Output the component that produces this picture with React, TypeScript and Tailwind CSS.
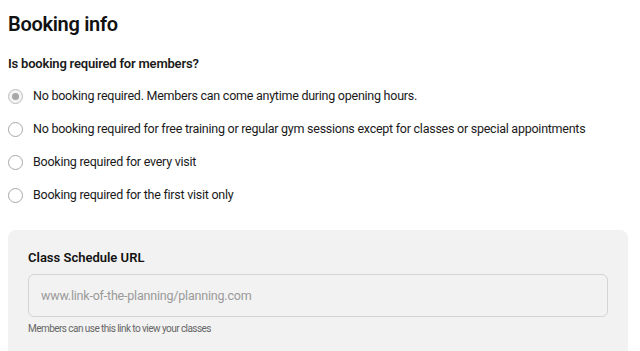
import React, { useState } from 'react';

const options = [
  'No booking required. Members can come anytime during opening hours.',
  'No booking required for free training or regular gym sessions except for classes or special appointments',
  'Booking required for every visit',
  'Booking required for the first visit only',
];

const Radio: React.FC<{ checked: boolean }> = ({ checked }) => (
  <span
    className={`flex h-[15px] w-[15px] shrink-0 items-center justify-center rounded-full border ${
      checked ? 'border-[#bdbdbd] bg-[#f4f4f4]' : 'border-[#a8a8a8] bg-white'
    }`}
  >
    {checked && <span className="h-[7px] w-[7px] rounded-full bg-[#a8a8a8]" />}
  </span>
);

export default function App() {
  const [selected, setSelected] = useState(0);

  return (
    <div
      className="min-h-screen bg-white px-2 pt-[11px] text-[#1a1a1a]"
      style={{ fontFamily: 'Roboto, "Noto Sans", sans-serif' }}
    >
      <h1 className="text-[20px] font-semibold leading-[26px] tracking-[-0.3px] text-[#111]">Booking info</h1>

      <p className="mt-[18px] text-[13px] font-semibold leading-[18px] tracking-[-0.2px]">
        Is booking required for members?
      </p>

      <div className="mt-[14px] flex flex-col gap-[15px]">
        {options.map((label, i) => (
          <label
            key={i}
            className="flex h-[18px] cursor-pointer items-center gap-[10px]"
            onClick={() => setSelected(i)}
          >
            <Radio checked={selected === i} />
            <span className="whitespace-nowrap text-[12.5px] leading-[18px] tracking-[-0.25px]">{label}</span>
          </label>
        ))}
      </div>

      <div className="mt-[26px] mr-[4px] rounded-lg bg-[#f2f2f2] px-5 pb-6 pt-[19px]">
        <p className="text-[13px] font-semibold leading-[18px] text-[#111]">Class Schedule URL</p>
        <input
          type="text"
          placeholder="www.link-of-the-planning/planning.com"
          className="mt-[7px] h-[43px] w-full rounded-md border border-[#d4d4d4] bg-[#f2f2f2] px-3 text-[12.5px] tracking-[-0.2px] text-[#333] outline-none placeholder:text-[#9a9a9a]"
        />
        <p className="mt-[5px] text-[10px] leading-[14px] tracking-[-0.55px] text-[#666]">
          Members can use this link to view your classes
        </p>
      </div>
    </div>
  );
}
